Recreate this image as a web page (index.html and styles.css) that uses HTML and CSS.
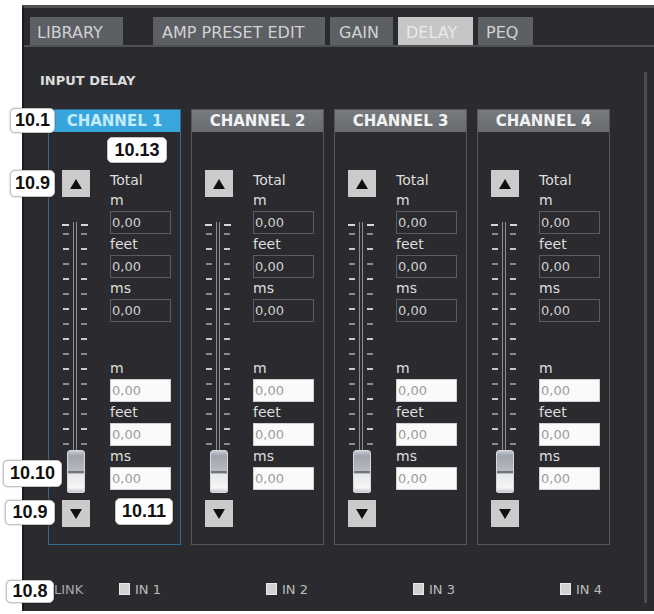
FILE: index.html
```html
<!DOCTYPE html>
<html>
<head>
<meta charset="utf-8">
<link rel="stylesheet" href="styles.css">
</head>
<body>
<div class="panel">
  <div class="tabs">
    <div class="tab tab-library">LIBRARY</div>
    <div class="tab tab-amp">AMP PRESET EDIT</div>
    <div class="tab tab-gain">GAIN</div>
    <div class="tab tab-delay">DELAY</div>
    <div class="tab tab-peq">PEQ</div>
  </div>
  <div class="content">
    <div class="section-title">INPUT DELAY</div>
    <div class="channels">

      <div class="channel channel-active">
        <div class="ch-header">CHANNEL 1</div>
        <div class="ch-body">
          <div class="fader-col">
            <div class="btn"><svg width="12" height="10" viewBox="0 0 12 10"><polygon points="6,0 12,10 0,10" fill="#111"/></svg></div>
            <div class="slider">
              <div class="tick-top"></div>
              <div class="ticks"></div>
              <div class="track"></div>
              <div class="thumb"></div>
            </div>
            <div class="btn"><svg width="12" height="10" viewBox="0 0 12 10"><polygon points="0,0 12,0 6,10" fill="#111"/></svg></div>
          </div>
          <div class="values">
            <div class="lbl lbl-total">Total</div>
            <div class="lbl">m</div>
            <div class="field">0,00</div>
            <div class="lbl">feet</div>
            <div class="field">0,00</div>
            <div class="lbl">ms</div>
            <div class="field">0,00</div>
            <div class="lbl lbl-gap">m</div>
            <div class="field field-edit">0,00</div>
            <div class="lbl">feet</div>
            <div class="field field-edit">0,00</div>
            <div class="lbl">ms</div>
            <div class="field field-edit">0,00</div>
          </div>
        </div>
      </div>

      <div class="channel">
        <div class="ch-header">CHANNEL 2</div>
        <div class="ch-body">
          <div class="fader-col">
            <div class="btn"><svg width="12" height="10" viewBox="0 0 12 10"><polygon points="6,0 12,10 0,10" fill="#111"/></svg></div>
            <div class="slider">
              <div class="tick-top"></div>
              <div class="ticks"></div>
              <div class="track"></div>
              <div class="thumb"></div>
            </div>
            <div class="btn"><svg width="12" height="10" viewBox="0 0 12 10"><polygon points="0,0 12,0 6,10" fill="#111"/></svg></div>
          </div>
          <div class="values">
            <div class="lbl lbl-total">Total</div>
            <div class="lbl">m</div>
            <div class="field">0,00</div>
            <div class="lbl">feet</div>
            <div class="field">0,00</div>
            <div class="lbl">ms</div>
            <div class="field">0,00</div>
            <div class="lbl lbl-gap">m</div>
            <div class="field field-edit">0,00</div>
            <div class="lbl">feet</div>
            <div class="field field-edit">0,00</div>
            <div class="lbl">ms</div>
            <div class="field field-edit">0,00</div>
          </div>
        </div>
      </div>

      <div class="channel">
        <div class="ch-header">CHANNEL 3</div>
        <div class="ch-body">
          <div class="fader-col">
            <div class="btn"><svg width="12" height="10" viewBox="0 0 12 10"><polygon points="6,0 12,10 0,10" fill="#111"/></svg></div>
            <div class="slider">
              <div class="tick-top"></div>
              <div class="ticks"></div>
              <div class="track"></div>
              <div class="thumb"></div>
            </div>
            <div class="btn"><svg width="12" height="10" viewBox="0 0 12 10"><polygon points="0,0 12,0 6,10" fill="#111"/></svg></div>
          </div>
          <div class="values">
            <div class="lbl lbl-total">Total</div>
            <div class="lbl">m</div>
            <div class="field">0,00</div>
            <div class="lbl">feet</div>
            <div class="field">0,00</div>
            <div class="lbl">ms</div>
            <div class="field">0,00</div>
            <div class="lbl lbl-gap">m</div>
            <div class="field field-edit">0,00</div>
            <div class="lbl">feet</div>
            <div class="field field-edit">0,00</div>
            <div class="lbl">ms</div>
            <div class="field field-edit">0,00</div>
          </div>
        </div>
      </div>

      <div class="channel">
        <div class="ch-header">CHANNEL 4</div>
        <div class="ch-body">
          <div class="fader-col">
            <div class="btn"><svg width="12" height="10" viewBox="0 0 12 10"><polygon points="6,0 12,10 0,10" fill="#111"/></svg></div>
            <div class="slider">
              <div class="tick-top"></div>
              <div class="ticks"></div>
              <div class="track"></div>
              <div class="thumb"></div>
            </div>
            <div class="btn"><svg width="12" height="10" viewBox="0 0 12 10"><polygon points="0,0 12,0 6,10" fill="#111"/></svg></div>
          </div>
          <div class="values">
            <div class="lbl lbl-total">Total</div>
            <div class="lbl">m</div>
            <div class="field">0,00</div>
            <div class="lbl">feet</div>
            <div class="field">0,00</div>
            <div class="lbl">ms</div>
            <div class="field">0,00</div>
            <div class="lbl lbl-gap">m</div>
            <div class="field field-edit">0,00</div>
            <div class="lbl">feet</div>
            <div class="field field-edit">0,00</div>
            <div class="lbl">ms</div>
            <div class="field field-edit">0,00</div>
          </div>
        </div>
      </div>

    </div>
    <div class="link-row">
      <div class="link-label">LINK</div>
      <div class="link-item"><span class="check"></span>IN 1</div>
      <div class="link-item"><span class="check"></span>IN 2</div>
      <div class="link-item"><span class="check"></span>IN 3</div>
      <div class="link-item link-item-last"><span class="check"></span>IN 4</div>
    </div>
  </div>
</div>

<div class="callout c-101">10.1</div>
<div class="callout c-1013">10.13</div>
<div class="callout c-109a">10.9</div>
<div class="callout c-1010">10.10</div>
<div class="callout c-109b">10.9</div>
<div class="callout c-1011">10.11</div>
<div class="callout c-108">10.8</div>
</body>
</html>
```

FILE: styles.css
```css
html, body {
  margin: 0;
  padding: 0;
  background: #ffffff;
}
body {
  position: relative;
  width: 654px;
  height: 614px;
  overflow: hidden;
  font-family: "DejaVu Sans", "Noto Sans", sans-serif;
}
.panel {
  margin: 5px 0 0 22px;
  height: 606px;
  box-sizing: border-box;
  background: #2b2b2f;
  border-top: 3px solid #4d4f53;
  border-left: 2px solid #1b1b1e;
}
.tabs {
  display: flex;
  gap: 5px;
  padding: 9px 0 0 6px;
  border-bottom: 2px solid #4e5155;
}
.tab {
  height: 28px;
  box-sizing: border-box;
  padding: 4px 0 0 8px;
  line-height: 24px;
  font-size: 16px;
  text-align: left;
  color: #d2d2d2;
  background: #5c5f63;
  white-space: nowrap;
}
.tab-library { width: 93px; margin-right: 25px; padding-left: 7px; }
.tab-amp { width: 172px; padding-left: 9px; }
.tab-gain { width: 63px; padding-left: 9px; }
.tab-delay { width: 75px; background: #c6c6c6; color: #e9e9e9; }
.tab-peq { width: 55px; }

.content {
  margin: 25px 7px 0 0;
  height: 531px;
  box-sizing: border-box;
  padding-left: 16px;
  border-right: 3px solid #4a4c50;
}
.section-title {
  font-size: 13px;
  font-weight: bold;
  line-height: 18px;
  color: #dcdcdc;
}
.channels {
  display: flex;
  gap: 10px;
  margin: 19px 0 0 8px;
}
.channel {
  flex: none;
  width: 133px;
  height: 436px;
  box-sizing: border-box;
  border: 1px solid #55575b;
}
.channel-active {
  border-color: #33698e;
}
.ch-header {
  height: 22px;
  line-height: 22px;
  text-align: center;
  font-size: 15px;
  font-weight: bold;
  color: #f2f2f2;
  background: linear-gradient(#777b80, #676b70);
}
.channel-active .ch-header {
  background: #39a5dd;
  color: #c4ecfb;
}
.ch-body {
  display: flex;
  padding-top: 38px;
}
.fader-col {
  width: 28px;
  margin-left: 13px;
  display: flex;
  flex-direction: column;
}
.btn {
  width: 28px;
  height: 27px;
  background: #cbcbcb;
  display: flex;
  align-items: center;
  justify-content: center;
}
.slider {
  position: relative;
  height: 303px;
}
.tick-top {
  position: absolute;
  top: 27px;
  left: 0;
  width: 26px;
  height: 2px;
  background:
    linear-gradient(#d8d8d8, #d8d8d8) left top / 7px 2px no-repeat,
    linear-gradient(#d8d8d8, #d8d8d8) right top / 7px 2px no-repeat;
}
.ticks {
  position: absolute;
  top: 36px;
  left: 1px;
  width: 24px;
  height: 212px;
  background:
    repeating-linear-gradient(#8a8a8a 0 2px, transparent 2px 15px, #c9c9c9 15px 17px, transparent 17px 30px) left top / 6px 100% no-repeat,
    repeating-linear-gradient(#8a8a8a 0 2px, transparent 2px 15px, #c9c9c9 15px 17px, transparent 17px 30px) right top / 6px 100% no-repeat;
}
.track {
  position: absolute;
  top: 25px;
  left: 11px;
  width: 4px;
  height: 271px;
  box-sizing: border-box;
  border-left: 1px solid #8e8e92;
  border-right: 1px solid #8e8e92;
}
.thumb {
  position: absolute;
  top: 253px;
  left: 5px;
  width: 18px;
  height: 43px;
  box-sizing: border-box;
  border: 1px solid #d6d8dc;
  border-radius: 3px 3px 2px 2px;
  background: linear-gradient(#c9ccd3 0, #9ea3ad 12%, #b6bac2 48%, #70747c 50%, #70747c 53%, #e6e8ea 56%, #f6f6f6 90%, #c8c8c8 100%);
}
.values {
  width: 61px;
  margin-left: 20px;
}
.lbl {
  height: 21px;
  line-height: 21px;
  font-size: 14px;
  color: #dedede;
}
.lbl-total {
  height: 20px;
  line-height: 20px;
}
.lbl-gap {
  margin-top: 36px;
}
.field {
  height: 23px;
  box-sizing: border-box;
  border: 1px solid #5a5c60;
  line-height: 21px;
  font-size: 13px;
  color: #cfcfcf;
  padding-left: 1px;
}
.field-edit {
  background: #fafafa;
  border-color: #d0d0d0;
  color: #9c9c9c;
}

.link-row {
  display: flex;
  align-items: center;
  margin: 35px 0 0 14px;
  height: 18px;
  font-size: 13px;
}
.link-label {
  flex: none;
  width: 65px;
  color: #a8a8a8;
}
.link-item {
  flex: none;
  width: 147px;
  display: flex;
  align-items: center;
  color: #bdbdbd;
}
.link-item-last {
  width: auto;
}
.check {
  width: 11px;
  height: 12px;
  margin-right: 5px;
  background: #d2d2d2;
  border: 1px solid #e8e8e8;
  box-sizing: border-box;
}

.callout {
  position: absolute;
  box-sizing: border-box;
  background: #ffffff;
  border: 1px solid #c4c4c4;
  border-radius: 5px;
  box-shadow: 0 0 2px rgba(0, 0, 0, 0.35);
  font-family: "Liberation Sans", Arial, sans-serif;
  font-weight: bold;
  font-size: 18px;
  color: #111111;
  text-align: center;
  display: flex;
  align-items: center;
  justify-content: center;
}
.c-101 { left: 10px; top: 108px; width: 45px; height: 25px; }
.c-1013 { left: 107px; top: 137px; width: 60px; height: 26px; }
.c-109a { left: 10px; top: 170px; width: 45px; height: 27px; }
.c-1010 { left: 3px; top: 460px; width: 59px; height: 27px; }
.c-109b { left: 5px; top: 500px; width: 50px; height: 25px; }
.c-1011 { left: 115px; top: 498px; width: 58px; height: 27px; }
.c-108 { left: 6px; top: 580px; width: 48px; height: 23px; }
```
